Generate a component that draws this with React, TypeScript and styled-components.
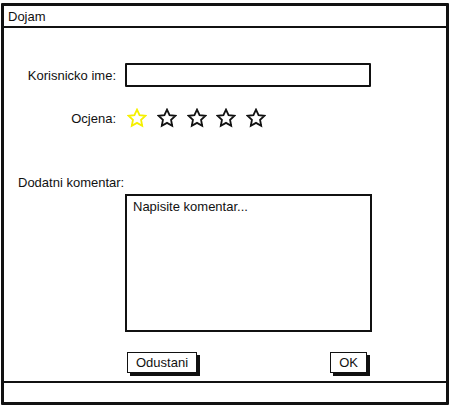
import * as React from 'react'
import styled, { createGlobalStyle } from 'styled-components'

const GlobalStyle = createGlobalStyle`
  html, body {
    margin: 0;
    padding: 0;
    background: #fff;
  }
  body {
    font-family: "Liberation Sans", Arial, sans-serif;
    font-size: 13px;
    color: #111;
  }
`

const Window = styled.div`
  box-sizing: border-box;
  margin: 3px 0 0 1px;
  width: 448px;
  height: 402px;
  border: 3px solid #111;
  border-radius: 1px;
  display: flex;
  flex-direction: column;
  background: #fff;
`

const TitleBar = styled.div`
  height: 20px;
  border-bottom: 2px solid #111;
  display: flex;
  align-items: center;
  padding-left: 4px;
`

const Content = styled.div`
  flex: 1;
  display: flex;
  flex-direction: column;
`

const StatusBar = styled.div`
  height: 19px;
  border-top: 2px solid #111;
`

const Row = styled.div<{ $top: number }>`
  display: grid;
  grid-template-columns: 112px auto;
  column-gap: 9px;
  align-items: center;
  margin-top: ${p => p.$top}px;
`

const Label = styled.label`
  text-align: right;
  white-space: nowrap;
`

const TextInput = styled.div`
  box-sizing: border-box;
  width: 246px;
  height: 24px;
  border: 2px solid #111;
  border-radius: 1px;
`

const Stars = styled.div`
  display: flex;
  gap: 9.8px;
  margin-left: 2px;
`

const SectionLabel = styled.div`
  margin: 47px 0 0 14px;
  line-height: 16px;
`

const Comment = styled.div`
  box-sizing: border-box;
  margin: 3px 0 0 121px;
  width: 247px;
  height: 138px;
  border: 2px solid #111;
  padding: 3px 6px;
  line-height: 16px;
`

const Buttons = styled.div`
  display: flex;
  justify-content: space-between;
  margin: 20px 0 0 123px;
  width: 240px;
`

const Button = styled.button`
  box-sizing: border-box;
  height: 21px;
  padding: 0 8px;
  border: 1.5px solid #111;
  background: #fff;
  box-shadow: 3px 3px 0 #111;
  font: inherit;
  font-size: 13px;
  color: #111;
  line-height: 16px;
`

const Star: React.FC<{ color: string }> = ({ color }) => (
  <svg width="20" height="20" viewBox="0 0 24 24" fill="none" stroke={color} strokeWidth="2.2" strokeLinejoin="miter">
    <polygon points="12,2 15.09,8.6 22,9.4 16.9,14.2 18.2,21.4 12,17.9 5.8,21.4 7.1,14.2 2,9.4 8.91,8.6" />
  </svg>
)

export default function App() {
  return (
    <>
      <GlobalStyle />
      <Window>
        <TitleBar>Dojam</TitleBar>
        <Content>
          <Row $top={35}>
            <Label>Korisnicko ime:</Label>
            <TextInput />
          </Row>
          <Row $top={21}>
            <Label>Ocjena:</Label>
            <Stars>
              <Star color="#f5f000" />
              <Star color="#111" />
              <Star color="#111" />
              <Star color="#111" />
              <Star color="#111" />
            </Stars>
          </Row>
          <SectionLabel>Dodatni komentar:</SectionLabel>
          <Comment>Napisite komentar...</Comment>
          <Buttons>
            <Button>Odustani</Button>
            <Button>OK</Button>
          </Buttons>
        </Content>
        <StatusBar />
      </Window>
    </>
  )
}
